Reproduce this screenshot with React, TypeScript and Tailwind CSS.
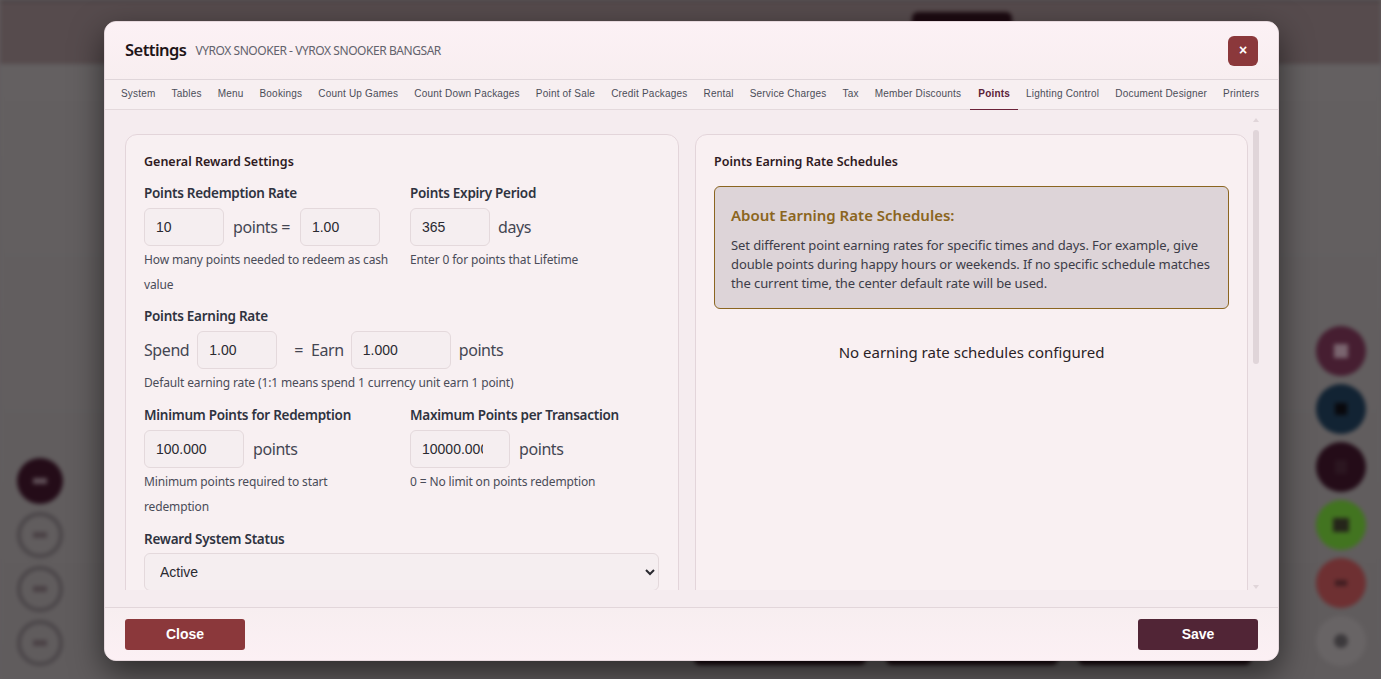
import React from "react";

const tabs = ["System","Tables","Menu","Bookings","Count Up Games","Count Down Packages","Point of Sale","Credit Packages","Rental","Service Charges","Tax","Member Discounts","Points","Lighting Control","Document Designer","Printers"];

function Label({ children }: { children: React.ReactNode }) {
  return <div className="-mt-[1px] text-[13.5px] leading-[20px] tracking-[-0.27px] font-semibold text-[#2f3340] mb-[5px]">{children}</div>;
}
function Help({ children }: { children: React.ReactNode }) {
  return <p className="mt-[1px] text-[12px] leading-[25px] tracking-[-0.14px] text-[#4a4c58]">{children}</p>;
}
function Field({ value, w }: { value: string; w: string }) {
  return (
    <input
      readOnly
      value={value}
      className={`${w} h-[38px] rounded-[6px] border border-[#e4d9dc] bg-[#f5eef0] pl-[11px] pr-[26px] text-[14px] text-[#2a2a30] font-['Liberation_Sans',sans-serif] outline-none`}
    />
  );
}
function Unit({ children }: { children: React.ReactNode }) {
  return <span className="text-[16px] tracking-[-0.42px] text-[#444652]">{children}</span>;
}
function Ring() {
  return (
    <div className="w-[46px] h-[46px] rounded-full flex items-center justify-center border-[4px] border-[#4a4548]">
      <div className="w-[14px] h-[6px] bg-[#4a4145]" />
    </div>
  );
}

export default function App() {
  return (
    <div className="relative w-[1381px] h-[679px] overflow-hidden bg-[#625e5f] font-['Noto_Sans',sans-serif]">
      {/* blurred page behind the dialog */}
      <div className="flex flex-col h-full blur-[2px]">
        <div className="h-[64px] shrink-0 bg-[#564b4d] border-t-[2px] border-[#443c3e] flex justify-end pr-[369px]">
          <div className="mt-[10px] w-[100px] h-[30px] rounded-[6px] bg-[#1c0a11]" />
        </div>
        <div className="flex-1 flex justify-between bg-gradient-to-b from-[#646061] to-[#605c5d]">
          <div className="flex flex-col justify-end gap-[8px] pl-[17px] pb-[13px]">
            <div className="w-[46px] h-[46px] rounded-full bg-[#240c18] flex items-center justify-center"><div className="w-[14px] h-[6px] bg-[#5e4e56]" /></div>
            <Ring />
            <Ring />
            <Ring />
          </div>
          <div className="flex items-end gap-[20px]">
            <div className="flex gap-[20px] mb-[14px] mr-[45px]">
              <div className="w-[172px] h-[40px] bg-[#1a0a10] rounded-[6px]" />
              <div className="w-[172px] h-[40px] bg-[#1a0a10] rounded-[6px]" />
              <div className="w-[173px] h-[40px] bg-[#1a0a10] rounded-[6px]" />
            </div>
            <div className="flex flex-col justify-end gap-[8px] pr-[15px] pb-[13px]">
              <div className="w-[50px] h-[50px] rounded-full bg-[#461e31] flex items-center justify-center"><div className="w-[14px] h-[14px] bg-[#7a656f]" /></div>
              <div className="w-[50px] h-[50px] rounded-full bg-[#122333] flex items-center justify-center"><div className="w-[12px] h-[12px] bg-[#09090d]" /></div>
              <div className="w-[50px] h-[50px] rounded-full bg-[#240c18] flex items-center justify-center"><div className="w-[12px] h-[14px] bg-[#2b1620]" /></div>
              <div className="w-[50px] h-[50px] rounded-full bg-[#427420] flex items-center justify-center"><div className="w-[16px] h-[14px] bg-[#25251a]" /></div>
              <div className="w-[50px] h-[50px] rounded-full bg-[#6e3032] flex items-center justify-center"><div className="w-[12px] h-[6px] bg-[#401d21]" /></div>
              <div className="w-[50px] h-[50px] rounded-full bg-[#686465] flex items-center justify-center"><div className="w-[14px] h-[14px] rounded-full bg-[#3c393c]" /></div>
            </div>
          </div>
        </div>
      </div>

      {/* dialog */}
      <div className="absolute left-[104px] top-[21px] w-[1175px] h-[640px] rounded-[12px] overflow-hidden flex flex-col bg-[#f5ecef] shadow-[0_12px_32px_rgba(0,0,0,0.55)] border border-[#e6d8dd]">
        <header className="h-[58px] shrink-0 flex items-center justify-between pl-[20px] pr-[20px] bg-gradient-to-b from-[#fcf1f5] to-[#f8eef0] border-b-[1.5px] border-[#e0d6da]">
          <div className="flex items-center gap-[9px]">
            <h1 className="text-[16.5px] font-semibold text-[#1e1418] tracking-[-0.55px]">Settings</h1>
            <span className="text-[12px] text-[#62626c] tracking-[-0.44px]">VYROX SNOOKER - VYROX SNOOKER BANGSAR</span>
          </div>
          <button className="w-[30px] h-[30px] rounded-[6px] bg-[#8b383b] text-white text-[14px] font-bold flex items-center justify-center font-['Liberation_Sans',sans-serif]">×</button>
        </header>

        <nav className="h-[30px] shrink-0 flex pl-[8px] bg-[#f7eff1] border-b border-[#e4d9dc] font-['Liberation_Sans',sans-serif]">
          {tabs.map((t) => (
            <div
              key={t}
              className={`h-[30px] px-[8px] pb-[3px] flex items-center text-[10px] tracking-[0.2px] whitespace-nowrap ${t === "Points" ? "font-bold text-[#5b2238] border-b-[1.5px] border-[#6b2238] ml-[1px]" : "text-[#4b4d58]"}`}
            >
              {t}
            </div>
          ))}
        </nav>

        <div className="flex-1 min-h-0 flex pt-[7px] pb-[17px] pl-[20px] pr-[15px]">
          <div className="flex-1 min-w-0 flex gap-[16px] overflow-hidden pt-[17px]">
            <section className="w-[554px] h-[560px] shrink-0 rounded-[12px] border border-[#e3d5da] bg-[#f8f0f2] px-[18px] pt-[17px]">
              <h2 className="text-[12.5px] leading-[20px] font-semibold text-[#2f1a22] mb-[12px]">General Reward Settings</h2>
              <div className="grid grid-cols-2 gap-x-[16px]">
                <div>
                  <Label>Points Redemption Rate</Label>
                  <div className="flex items-center gap-[9px]">
                    <Field value="10" w="w-[80px]" />
                    <Unit>points =</Unit>
                    <Field value="1.00" w="w-[80px] ml-[1px]" />
                  </div>
                  <Help>How many points needed to redeem as cash value</Help>
                </div>
                <div>
                  <Label>Points Expiry Period</Label>
                  <div className="flex items-center gap-[8px]">
                    <Field value="365" w="w-[80px]" />
                    <Unit>days</Unit>
                  </div>
                  <Help>Enter 0 for points that Lifetime</Help>
                </div>
              </div>

              <div className="mt-[10px]">
                <Label>Points Earning Rate</Label>
                <div className="flex items-center gap-[8px]">
                  <Unit>Spend</Unit>
                  <Field value="1.00" w="w-[80px]" />
                  <Unit><span className="ml-[9px]">=</span></Unit>
                  <Unit>Earn</Unit>
                  <Field value="1.000" w="w-[100px] -ml-[1px]" />
                  <Unit>points</Unit>
                </div>
                <Help>Default earning rate (1:1 means spend 1 currency unit earn 1 point)</Help>
              </div>

              <div className="grid grid-cols-2 gap-x-[16px] mt-[11px]">
                <div>
                  <Label>Minimum Points for Redemption</Label>
                  <div className="flex items-center gap-[9px]">
                    <Field value="100.000" w="w-[100px]" />
                    <Unit>points</Unit>
                  </div>
                  <Help>Minimum points required to start redemption</Help>
                </div>
                <div>
                  <Label>Maximum Points per Transaction</Label>
                  <div className="flex items-center gap-[9px]">
                    <Field value="10000.000" w="w-[100px]" />
                    <Unit>points</Unit>
                  </div>
                  <Help>0 = No limit on points redemption</Help>
                </div>
              </div>

              <div className="mt-[11px]">
                <Label>Reward System Status</Label>
                <select className="-mt-[1px] w-[515px] h-[38px] rounded-[6px] border border-[#e4d9dc] bg-[#f5eef0] pl-[11px] text-[14px] text-[#2a2a30] font-['Liberation_Sans',sans-serif] outline-none appearance-auto">
                  <option>Active</option>
                </select>
              </div>
            </section>

            <section className="w-[553px] h-[560px] shrink-0 rounded-[12px] border border-[#e3d5da] bg-[#f9f0f2] px-[18px] pt-[17px]">
              <h2 className="text-[12.5px] leading-[20px] font-semibold text-[#2f1a22] mb-[14px]">Points Earning Rate Schedules</h2>
              <div className="h-[123px] rounded-[6px] border border-[#8b6520] bg-[#ddd4d8] px-[16px] pt-[16px]">
                <h3 className="text-[15px] leading-[24px] font-semibold text-[#8b6520]">About Earning Rate Schedules:</h3>
                <p className="mt-[9px] text-[13px] leading-[19px] tracking-[-0.1px] text-[#3c3c48]">Set different point earning rates for specific times and days. For example, give double points during happy hours or weekends. If no specific schedule matches the current time, the center default rate will be used.</p>
              </div>
              <p className="mt-[31px] text-center text-[15px] leading-[24px] text-[#2a2226]">No earning rate schedules configured</p>
            </section>
          </div>

          <div className="w-[14px] shrink-0 ml-[1px] flex flex-col items-center pt-[1px]">
            <div className="w-0 h-0 border-x-[3px] border-x-transparent border-b-[4px] border-b-[#e0d5d9]" />
            <div className="mt-[8px] w-[6px] h-[234px] rounded-full bg-[#e0d5d9]" />
            <div className="flex-1" />
            <div className="w-0 h-0 border-x-[3px] border-x-transparent border-t-[4px] border-t-[#e0d5d9] mb-[1px]" />
          </div>
        </div>

        <footer className="h-[53px] shrink-0 flex items-center justify-between px-[20px] bg-gradient-to-b from-[#f7eef0] to-[#fcf0f4] border-t-[1.5px] border-[#e2d6da] font-['Liberation_Sans',sans-serif]">
          <button className="w-[120px] h-[31px] rounded-[3px] bg-[#8b383b] text-white text-[14px] font-bold">Close</button>
          <button className="w-[120px] h-[31px] rounded-[3px] bg-[#512536] text-white text-[14px] font-bold">Save</button>
        </footer>
      </div>
    </div>
  );
}
